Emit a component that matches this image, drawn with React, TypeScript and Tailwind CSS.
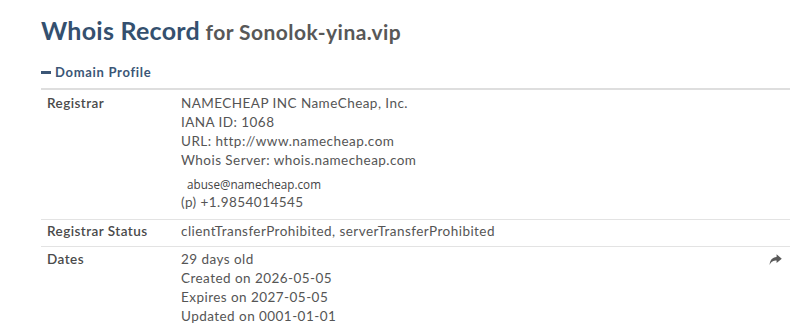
import React from "react";

const labelCls = "w-[140px] shrink-0 pl-[6px] font-semibold text-[#4a4a4a] tracking-[0.45px]";

export default function App() {
  return (
    <div className="bg-white w-[800px] h-[331px] overflow-hidden pl-[41px] pr-[10px] text-[#555]" style={{ fontFamily: "Lato, 'Open Sans', sans-serif" }}>
      <h1 className="pt-[14px] leading-[32px] whitespace-nowrap">
        <span className="text-[25px] font-bold text-[#34506f] tracking-[0.25px]">Whois Record</span>
        <span className="text-[21px] font-bold text-[#585858] tracking-[0.45px]"> for Sonolok-yina.vip</span>
      </h1>
      <div className="mt-[14px] flex items-center text-[13px] font-bold text-[#3b5676] leading-[16px] tracking-[0.7px]">
        <span className="inline-block w-[10px] h-[3px] bg-[#3b5676] mr-[4px]" />
        Domain Profile
      </div>
      <div className="mt-[8px] border-t-2 border-[#dedede] text-[13.5px] leading-[19px] tracking-[0.45px]">
        <div className="flex border-b border-[#e3e3e3] pt-[4px] pb-[7px]">
          <div className={labelCls}>Registrar</div>
          <div className="flex-1">
            <div>NAMECHEAP INC NameCheap, Inc.</div>
            <div>IANA ID: 1068</div>
            <div>URL: http://www.namecheap.com</div>
            <div>Whois Server: whois.namecheap.com</div>
            <div className="mt-[5px] pl-[6px] text-[11.7px] text-[#444] leading-[18px] tracking-[0px]" style={{ fontFamily: "'Open Sans', sans-serif" }}>abuse@namecheap.com</div>
            <div>(p) +1.9854014545</div>
          </div>
        </div>
        <div className="flex border-b border-[#e3e3e3] pt-[2px] pb-[5px]">
          <div className={labelCls}>Registrar Status</div>
          <div className="flex-1">clientTransferProhibited, serverTransferProhibited</div>
        </div>
        <div className="flex pt-[3px]">
          <div className={labelCls}>Dates</div>
          <div className="flex-1">
            <div>29 days old</div>
            <div>Created on 2026-05-05</div>
            <div>Expires on 2027-05-05</div>
            <div>Updated on 0001-01-01</div>
          </div>
          <div className="ml-auto pr-[8px] pt-[4px]">
            <svg width="13" height="12" viewBox="0 0 12 11" className="block">
              <path d="M7 0.3 L11.8 4.3 L7 8.3 L7 6 C4 6 2 6.8 0.6 10.2 C0.8 5.6 3 3 7 2.7 Z" fill="#5a5a5a" />
            </svg>
          </div>
        </div>
      </div>
    </div>
  );
}
